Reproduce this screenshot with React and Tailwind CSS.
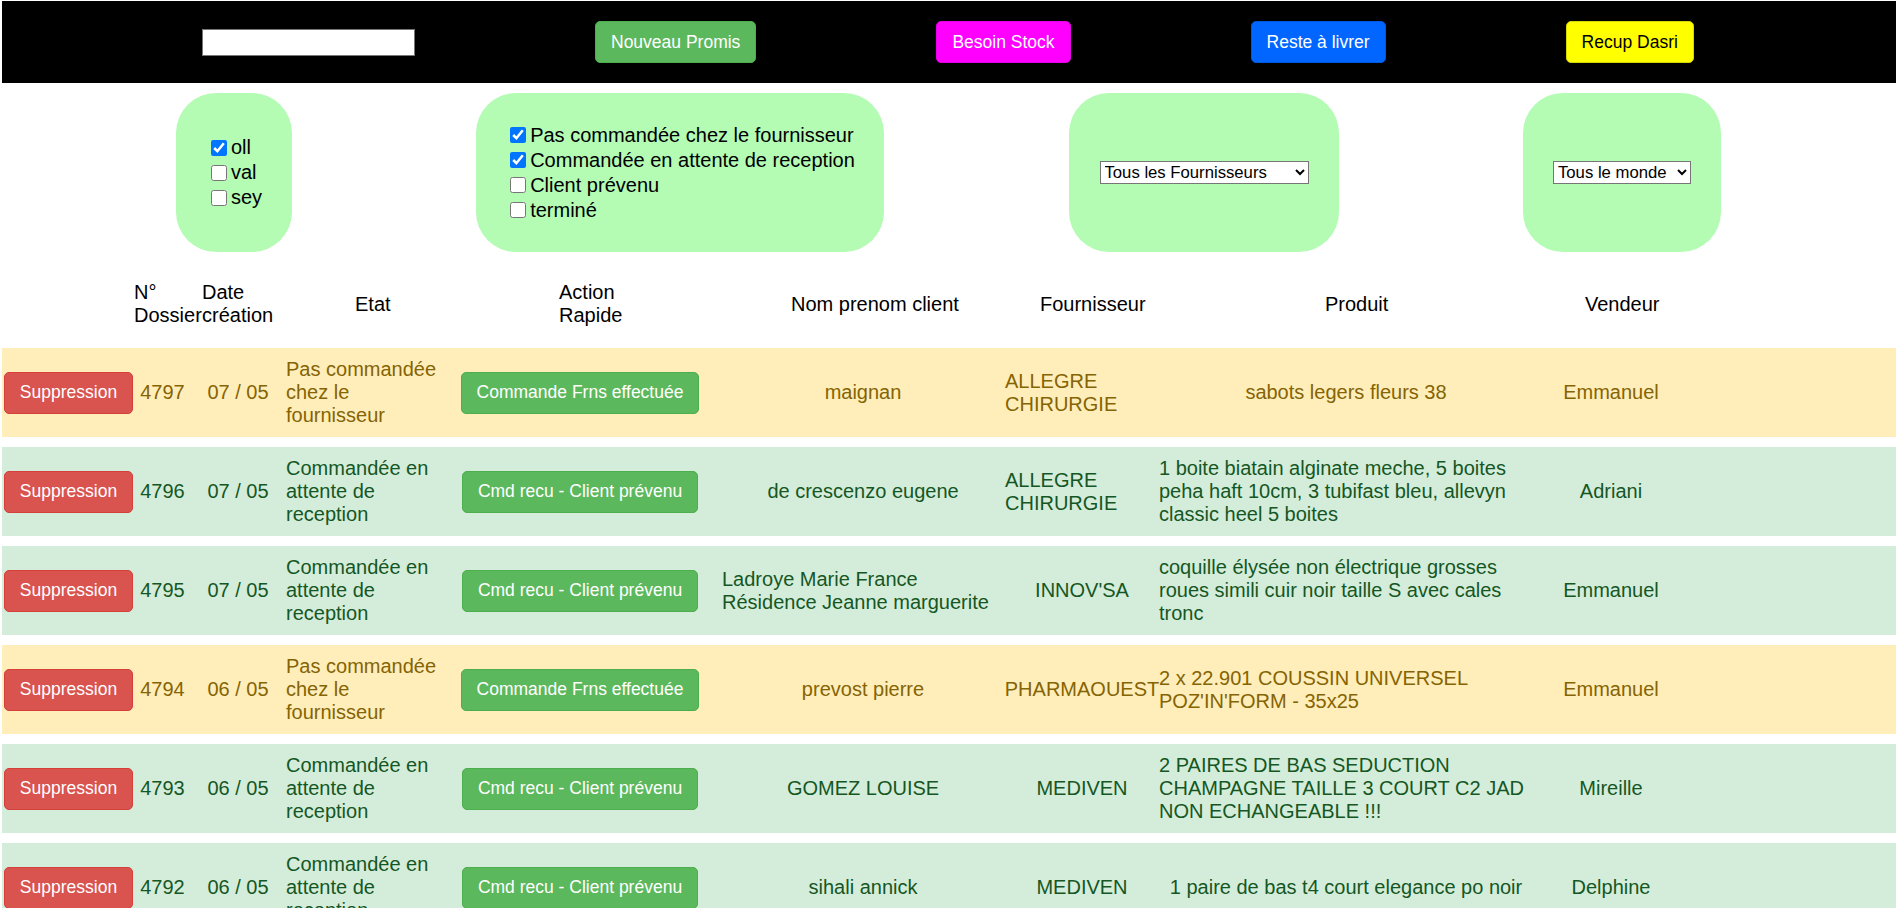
import { useState } from 'react'

const rows = [
  { id: 4797, date: '07 / 05', etat: 'Pas commandée chez le fournisseur', action: 'Commande Frns effectuée', nom: 'maignan', frns: 'ALLEGRE CHIRURGIE', produit: 'sabots legers fleurs 38', vendeur: 'Emmanuel', warn: true },
  { id: 4796, date: '07 / 05', etat: 'Commandée en attente de reception', action: 'Cmd recu - Client prévenu', nom: 'de crescenzo eugene', frns: 'ALLEGRE CHIRURGIE', produit: '1 boite biatain alginate meche, 5 boites peha haft 10cm, 3 tubifast bleu, allevyn classic heel 5 boites', vendeur: 'Adriani' },
  { id: 4795, date: '07 / 05', etat: 'Commandée en attente de reception', action: 'Cmd recu - Client prévenu', nom: 'Ladroye Marie France Résidence Jeanne marguerite', frns: "INNOV'SA", produit: 'coquille élysée non électrique grosses roues simili cuir noir taille S avec cales tronc', vendeur: 'Emmanuel' },
  { id: 4794, date: '06 / 05', etat: 'Pas commandée chez le fournisseur', action: 'Commande Frns effectuée', nom: 'prevost pierre', frns: 'PHARMAOUEST', produit: "2 x 22.901 COUSSIN UNIVERSEL POZ'IN'FORM - 35x25", vendeur: 'Emmanuel', warn: true },
  { id: 4793, date: '06 / 05', etat: 'Commandée en attente de reception', action: 'Cmd recu - Client prévenu', nom: 'GOMEZ LOUISE', frns: 'MEDIVEN', produit: '2 PAIRES DE BAS SEDUCTION CHAMPAGNE TAILLE 3 COURT C2 JAD NON ECHANGEABLE !!!', vendeur: 'Mireille' },
  { id: 4792, date: '06 / 05', etat: 'Commandée en attente de reception', action: 'Cmd recu - Client prévenu', nom: 'sihali annick', frns: 'MEDIVEN', produit: '1 paire de bas t4 court elegance po noir', vendeur: 'Delphine' },
]

const btn = 'rounded-[5px] border-[1.25px] px-[15px] py-[7.5px] text-[17.5px] leading-[25px] whitespace-nowrap'

function Check ({ label, checked }) {
  return (
    <label className="flex h-[25px] items-center">
      <input type="checkbox" defaultChecked={checked} className="ml-[5px] mr-[4px] h-[16px] w-[16px]" />
      <span className="whitespace-nowrap">{label}</span>
    </label>
  )
}

export default function App () {
  const [search, setSearch] = useState('')

  return (
    <div className="h-screen overflow-hidden bg-white pl-[2px] pt-[1px] font-['Liberation_Sans',Arial,sans-serif] text-[20px] leading-[23px] text-black">
      {/* barre du haut */}
      <div className="flex h-[82px] items-center gap-[180px] bg-black pl-[200px]">
        <input value={search} onChange={e => setSearch(e.target.value)} className="h-[27px] w-[213px] border border-[#767676] bg-white" />
        <button className={`${btn} border-[#4cae4c] bg-[#5cb85c] text-white`}>Nouveau Promis</button>
        <button className={`${btn} border-[#e600e6] bg-[#ff00ff] text-white`}>Besoin Stock</button>
        <button className={`${btn} border-[#0058dd] bg-[#0066ff] text-white`}>Reste à livrer</button>
        <button className={`${btn} border-[#d6d600] bg-[#ffff00] text-black`}>Recup Dasri</button>
      </div>

      {/* filtres */}
      <div className="mt-[10px] flex gap-[184px] pl-[174px]">
        <div className="flex h-[159px] w-[116px] items-center justify-center rounded-[40px] bg-[#b4fbb4]">
          <div>
            <Check label="oll" checked />
            <Check label="val" />
            <Check label="sey" />
          </div>
        </div>
        <div className="flex h-[159px] w-[408px] items-center justify-center rounded-[40px] bg-[#b4fbb4]">
          <div>
            <Check label="Pas commandée chez le fournisseur" checked />
            <Check label="Commandée en attente de reception" checked />
            <Check label="Client prévenu" />
            <Check label="terminé" />
          </div>
        </div>
        <div className="ml-px flex h-[159px] w-[270px] items-center justify-center rounded-[40px] bg-[#b4fbb4]">
          <select className="h-[23px] w-[209px] border border-[#767676] bg-white text-[16.7px] leading-[20px]">
            <option>Tous les Fournisseurs</option>
          </select>
        </div>
        <div className="flex h-[159px] w-[198px] items-center justify-center rounded-[40px] bg-[#b4fbb4]">
          <select className="h-[23px] w-[138px] border border-[#767676] bg-white text-[16.7px] leading-[20px]">
            <option>Tous le monde</option>
          </select>
        </div>
      </div>

      {/* entête du tableau */}
      <div className="flex h-[96px] items-center pt-[8px]">
        <div className="w-[132px]" />
        <div className="w-[68px]">N°<br />Dossier</div>
        <div className="w-[153px]">Date<br />création</div>
        <div className="w-[204px]">Etat</div>
        <div className="w-[232px]">Action<br />Rapide</div>
        <div className="w-[249px]">Nom prenom client</div>
        <div className="w-[285px]">Fournisseur</div>
        <div className="w-[260px]">Produit</div>
        <div>Vendeur</div>
      </div>

      {/* lignes */}
      <div className="flex flex-col gap-[10px]">
        {rows.map(r => (
          <div key={r.id} className={`flex h-[89px] shrink-0 ${r.warn ? 'bg-[#ffeeba] text-[#856404]' : 'bg-[#d4edda] text-[#155724]'}`}>
            <div className="flex w-[133px] items-center justify-center">
              <button className={`${btn} border-[#d43f3a] bg-[#d9534f] text-white`}>Suppression</button>
            </div>
            <div className="flex w-[55px] items-center justify-center">{r.id}</div>
            <div className="flex w-[96px] items-center justify-center">{r.date}</div>
            <div className="flex w-[152px] items-center justify-center">{r.etat}</div>
            <div className="flex w-[284px] items-center justify-center">
              <button className={`${btn} border-[#4cae4c] bg-[#5cb85c] text-white`}>{r.action}</button>
            </div>
            <div className="flex w-[282px] items-center justify-center">{r.nom}</div>
            <div className="flex w-[155px] items-center justify-center pl-px">{r.frns}</div>
            <div className="flex w-[374px] items-center justify-center">{r.produit}</div>
            <div className="flex w-[156px] items-center justify-center">{r.vendeur}</div>
            <div className="flex-1" />
          </div>
        ))}
      </div>
    </div>
  )
}
